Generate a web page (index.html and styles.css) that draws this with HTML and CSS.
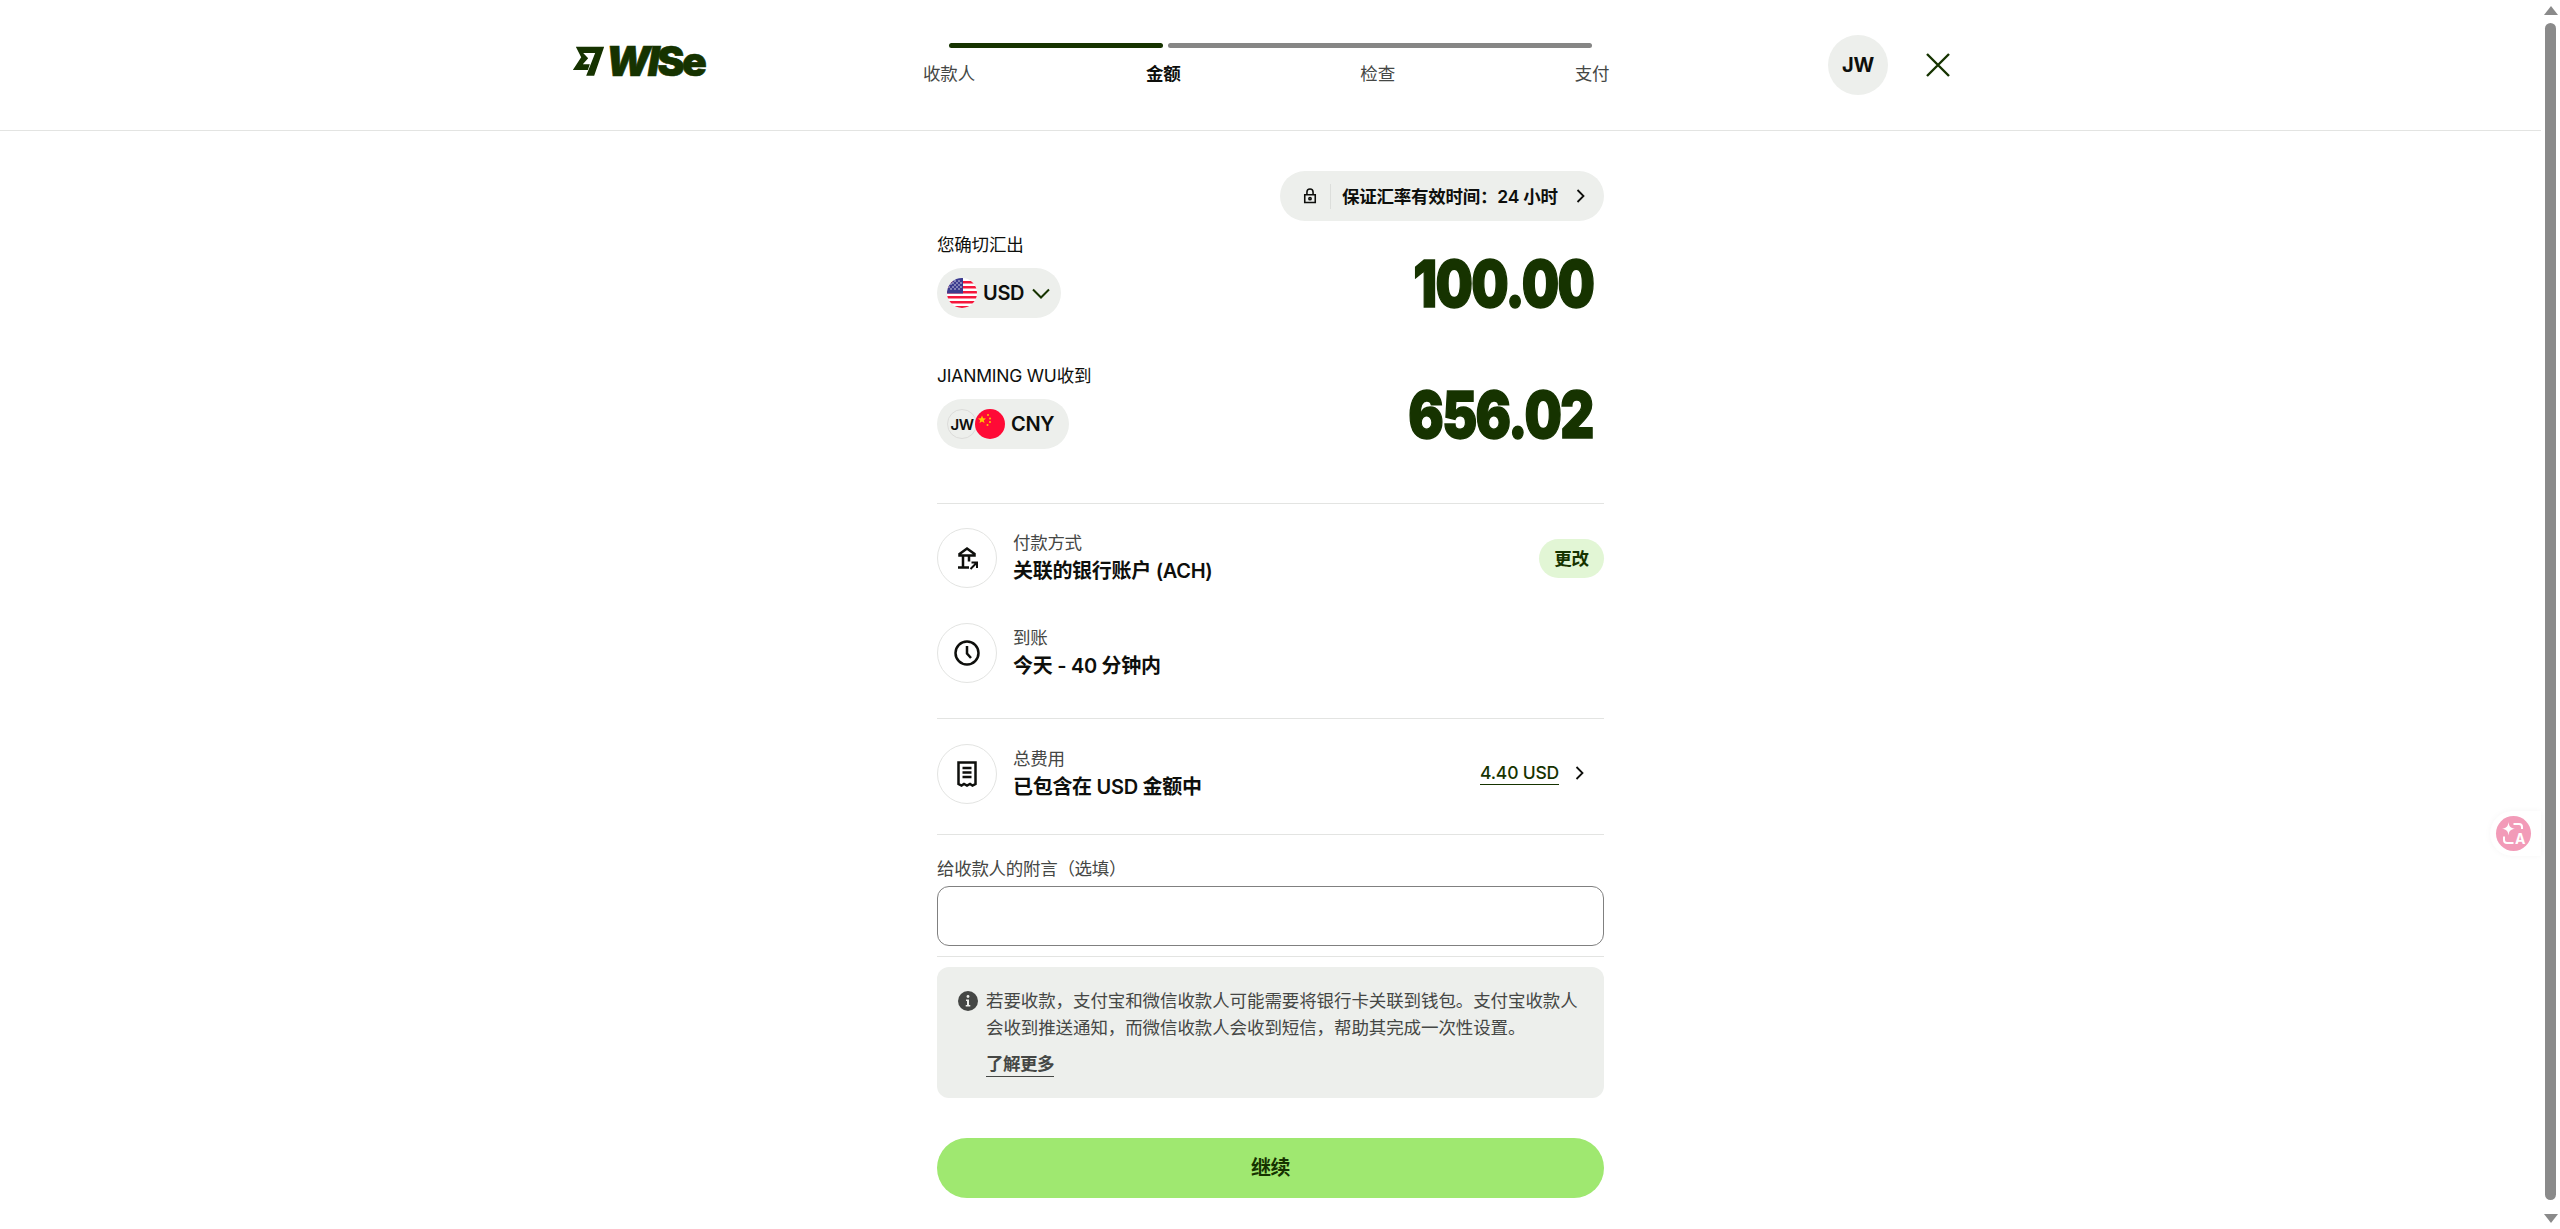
FILE: index.html
```html
<!DOCTYPE html>
<html lang="zh-CN">
<head>
<meta charset="utf-8">
<title>Wise</title>
<link rel="stylesheet" href="styles.css">
</head>
<body>
<div class="page">
  <header class="topbar">
    <div class="topbar-inner">
      <a class="logo">
        <svg class="logo-flag" viewBox="100 138 95 90"><path fill="#163300" d="M108 140H193L163 227H139L166 159H130L145 175L129 193H150L144 210H99L124 172Z"/></svg>
        <span class="logo-word"><span class="logo-slant">WI</span>Se</span>
      </a>
      <div class="stepper">
        <div class="bars"><span class="bar done"></span><span class="bar todo"></span></div>
        <div class="steps"><span class="step">收款人</span><span class="step active">金额</span><span class="step">检查</span><span class="step">支付</span></div>
      </div>
      <div class="top-actions">
        <span class="avatar">JW</span>
        <span class="close"><svg viewBox="0 0 24 24" class="close-icon"><path d="M1 1L23 23M23 1L1 23"/></svg></span>
      </div>
    </div>
  </header>
  <main class="column">
    <div class="rate-row">
      <div class="rate-pill">
        <svg class="lock" viewBox="0 0 16 18"><path d="M2 7.500H14V16.500H2ZM4.500 7.500V4.500A3.500 3.500 0 0 1 11.500 4.500V7.500"/><circle cx="8" cy="12" r="1.300"/></svg>
        <span class="rate-sep"></span>
        <span class="rate-text">保证汇率有效时间：24 小时</span>
        <svg class="chev-right" viewBox="0 0 9 14"><path d="M1.500 1L7.500 7L1.500 13"/></svg>
      </div>
    </div>

    <section class="amount first">
      <div class="amount-left">
        <div class="label">您确切汇出</div>
        <div class="cur-pill">
          <svg class="flag" viewBox="0 0 30 30"><defs><clipPath id="c1"><circle cx="15" cy="15" r="15"/></clipPath></defs><g clip-path="url(#c1)"><rect width="30" height="30" fill="#fff"/><path fill="#f5173c" d="M0 3H30V5.500H0ZM0 8H30V10.500H0ZM0 13H30V15.500H0ZM0 18H30V20.500H0ZM0 23H30V25.500H0ZM0 28H30V30H0Z"/><rect width="16" height="15.500" fill="#3c3b8f"/><g fill="#fff"><circle cx="4" cy="6" r=".7"/><circle cx="8" cy="3" r=".7"/><circle cx="8" cy="7" r=".7"/><circle cx="12" cy="3" r=".7"/><circle cx="12" cy="7" r=".7"/><circle cx="4" cy="11" r=".7"/><circle cx="8" cy="11" r=".7"/><circle cx="12" cy="11" r=".7"/><circle cx="2" cy="9" r=".7"/><circle cx="6" cy="9" r=".7"/><circle cx="10" cy="9" r=".7"/><circle cx="14" cy="9" r=".7"/><circle cx="6" cy="5" r=".7"/><circle cx="10" cy="5" r=".7"/><circle cx="14" cy="5" r=".7"/></g></g></svg>
          <span class="cur-code">USD</span>
          <svg class="chev-down" viewBox="0 0 18 11"><path d="M1 1.500L9 9.500L17 1.500"/></svg>
        </div>
      </div>
      <div class="value">100.00</div>
    </section>

    <section class="amount second">
      <div class="amount-left">
        <div class="label">JIANMING WU收到</div>
        <div class="cur-pill">
          <span class="mini-avatar">JW</span>
          <svg class="flag" viewBox="0 0 30 30"><circle cx="15" cy="15" r="15" fill="#ff0a36"/><g fill="#ffc400"><path d="M7 6.500L8.100 9.300L11 9.500L8.800 11.300L9.500 14.100L7 12.600L4.500 14.100L5.200 11.300L3 9.500L5.900 9.300Z"/><circle cx="13" cy="6" r="1"/><circle cx="15" cy="9.500" r="1"/><circle cx="15" cy="13" r="1"/><circle cx="12.500" cy="16" r="1"/></g></svg>
          <span class="cur-code">CNY</span>
        </div>
      </div>
      <div class="value">656.02</div>
    </section>

    <hr class="rule rule-a">

    <div class="info-row first-row">
      <span class="round-icon"><svg class="ri bank" viewBox="0 0 24 24"><path d="M4.500 8L12 2.500L19.500 8V9.500H4.500ZM8 9.500V21M14 9.500V15.500M3 21.500H14"/><path class="thin" d="M15.500 23L21 17.500M16.500 16.500H22V22"/></svg></span>
      <div class="info-text"><div class="info-title">付款方式</div><div class="info-main">关联的银行账户 (ACH)</div></div>
      <button class="change">更改</button>
    </div>
    <div class="info-row second-row">
      <span class="round-icon"><svg class="ri clock" viewBox="0 0 26 26"><circle cx="13" cy="13" r="11.500"/><path d="M13 6V13.500L17 18"/></svg></span>
      <div class="info-text"><div class="info-title">到账</div><div class="info-main">今天 - 40 分钟内</div></div>
    </div>

    <hr class="rule rule-b">

    <div class="info-row">
      <span class="round-icon"><svg class="ri receipt" viewBox="0 0 20 26"><path d="M1.500 23V1.500H18.500V23L15.500 24.500L13 23L10 24.500L7 23L4.500 24.500Z"/><path d="M5.500 7H14.500M5.500 11.500H14.500M5.500 16H14.500"/></svg></span>
      <div class="info-text"><div class="info-title">总费用</div><div class="info-main">已包含在 USD 金额中</div></div>
      <div class="fee"><span class="fee-link">4.40 USD</span><svg class="chev-right" viewBox="0 0 9 14"><path d="M1.500 1L7.500 7L1.500 13"/></svg></div>
    </div>

    <hr class="rule rule-c">

    <label class="field-label" for="msg">给收款人的附言（选填）</label>
    <input id="msg" class="field" type="text">
    <hr class="rule rule-d">

    <div class="alert">
      <svg class="alert-icon" viewBox="0 0 20 20"><circle cx="10" cy="10" r="10" fill="#454745"/><circle cx="10" cy="5.500" r="1.400" fill="#edefec"/><path d="M8 8.500H11V14H12.300V15.500H7.700V14H9V10H8Z" fill="#edefec"/></svg>
      <div class="alert-body">
        <p class="alert-text">若要收款，支付宝和微信收款人可能需要将银行卡关联到钱包。支付宝收款人会收到推送通知，而微信收款人会收到短信，帮助其完成一次性设置。</p>
        <a class="alert-link">了解更多</a>
      </div>
    </div>

    <button class="continue">继续</button>
  </main>
  <div class="fab">
    <span class="fab-circle">
      <svg class="fab-icon" viewBox="0 0 35 35"><path class="fab-fill" d="M12.500 6C13 10.500 14.500 12 19 12.800C14.500 13.500 13 15 12.500 19.500C12 15 10.500 13.500 6 12.800C10.500 12 12 10.500 12.500 6Z"/><path class="fab-line" d="M17.500 8H23A3 3 0 0 1 26 11V13M8 20.500V24A3 3 0 0 0 11 27H17.500"/><text class="fab-a" x="19" y="28">A</text></svg>
    </span>
  </div>
</div>
<div class="scrollbar">
  <span class="arrow up"></span>
  <span class="thumb"></span>
  <span class="arrow down"></span>
</div>
</body>
</html>
```
FILE: styles.css
```css
* { box-sizing: border-box; }
html, body { margin: 0; height: 100%; overflow: hidden; }
body {
  display: flex;
  background: #fff;
  color: #0e0f0c;
  font-family: Inter, "Noto Sans CJK SC", sans-serif;
  font-size: 17.5px;
}
.page { flex: 1; position: relative; min-width: 0; }

/* header */
.topbar { height: 131px; border-bottom: 1px solid #e3e4e2; }
.topbar-inner { width: 1395px; height: 130px; margin: 0 auto; display: flex; position: relative; }
.logo { display: flex; align-items: flex-start; width: 376px; padding-top: 46px; flex: none; }
.logo-flag { width: 32px; height: 30px; flex: none; }
.logo-word {
  font-weight: 900;
  font-size: 41px;
  line-height: 30px;
  letter-spacing: -2.500px;
  color: #163300;
  margin-left: 1px;
  -webkit-text-stroke: .6px #163300;
}
.logo-slant { font-style: italic; }
.stepper { width: 643px; flex: none; padding-top: 43px; }
.bars { display: flex; gap: 5px; height: 5px; }
.bar { display: block; height: 5px; border-radius: 3px; }
.bar.done { width: 214px; background: #163300; }
.bar.todo { flex: 1; background: #868685; }
.steps { display: flex; justify-content: space-between; margin: 13px -30px 0; }
.step { width: 60px; text-align: center; font-size: 17.5px; line-height: 25px; color: #454745; letter-spacing: -.2px; white-space: nowrap; }
.step.active { font-weight: 700; color: #0e0f0c; }
.top-actions { margin-left: auto; display: flex; gap: 20px; padding-top: 35px; align-items: flex-start; }
.avatar { width: 60px; height: 60px; border-radius: 50%; background: #edefec; display: flex; align-items: center; justify-content: center; font-weight: 700; font-size: 20px; letter-spacing: -.3px; }
.close { width: 60px; height: 60px; display: flex; align-items: center; justify-content: center; }
.close-icon { width: 24px; height: 24px; fill: none; stroke: #163300; stroke-width: 2.400; }

/* column */
.column { width: 667px; margin: 0 auto; }
.rate-row { display: flex; justify-content: flex-end; padding-top: 40px; }
.rate-pill { width: 324px; height: 50px; border-radius: 25px; background: #edefec; display: flex; align-items: center; padding-left: 23px; }
.lock { width: 14px; height: 16px; fill: none; stroke: #0e0f0c; stroke-width: 1.800; flex: none; }
.rate-sep { width: 1px; height: 25px; background: #dcdedb; margin: 0 11px 0 13px; flex: none; }
.rate-text { font-weight: 600; font-size: 17.5px; line-height: 25px; width: 234px; white-space: nowrap; letter-spacing: -.25px; }
.chev-right { width: 9px; height: 14px; fill: none; stroke: #0e0f0c; stroke-width: 1.800; flex: none; }

.amount { display: flex; justify-content: space-between; align-items: flex-start; }
.amount.first { padding-top: 11px; }
.amount.second { padding-top: 45px; }
.label { font-size: 17.5px; line-height: 25px; letter-spacing: -.2px; margin-bottom: 11px; white-space: nowrap; }
.cur-pill { display: inline-flex; align-items: center; height: 50px; border-radius: 25px; background: #edefec; padding: 0 11px 0 10px; }
.flag { width: 30px; height: 30px; flex: none; }
.cur-code { font-weight: 600; font-size: 20px; line-height: 25px; margin-left: 6px; letter-spacing: -.3px; }
.chev-down { width: 18px; height: 11px; margin-left: 8px; fill: none; stroke: #163300; stroke-width: 2; }
.mini-avatar { width: 30px; height: 30px; margin-right: -2px; border-radius: 50%; border: 1px solid #dcdcda; font-size: 15px; font-weight: 600; display: flex; align-items: center; justify-content: center; letter-spacing: -.4px; }
.second .cur-pill { padding-right: 15px; }
.value {
  font-family: Inter, sans-serif;
  font-weight: 900;
  font-size: 65px;
  line-height: 60px;
  letter-spacing: -2px;
  color: #163300;
  -webkit-text-stroke: 1.500px #163300;
  margin-top: 22px;
  margin-right: 11px;
  transform: scaleX(.81);
  transform-origin: right center;
}

.rule { border: 0; height: 1px; background: #e3e4e2; margin: 0; }
.rule-a { margin-top: 54px; }
.rule-b { margin-top: 35px; }
.rule-c { margin-top: 30px; }
.rule-d { margin-top: 10px; }

.info-row { display: flex; align-items: center; height: 60px; margin-top: 25px; }
.info-row.first-row { margin-top: 24px; }
.info-row.second-row { margin-top: 35px; }
.round-icon { width: 60px; height: 60px; border-radius: 50%; border: 1px solid #e3e4e2; display: flex; align-items: center; justify-content: center; flex: none; }
.ri { fill: none; stroke: #0e0f0c; stroke-width: 2.500; }
.bank { width: 24px; height: 24px; }
.bank .thin { stroke-width: 2; }
.clock { width: 26px; height: 26px; }
.receipt { width: 20px; height: 26px; }
.info-text { margin-left: 16px; flex: 1; min-width: 0; }
.info-title { font-size: 17.5px; line-height: 25px; color: #454745; letter-spacing: -.3px; }
.info-main { font-size: 20px; line-height: 31px; margin-top: 1px; font-weight: 600; letter-spacing: -.3px; }
.change { border: 0; padding: 0; width: 65px; height: 39px; border-radius: 20px; background: #e2f6d5; color: #163300; font: 600 17.5px/25px Inter, "Noto Sans CJK SC", sans-serif; letter-spacing: -.3px; }
.fee { display: flex; align-items: center; padding-right: 20px; gap: 16px; margin-top: -2px; }
.fee-link { font-size: 17.5px; line-height: 23px; font-weight: 500; color: #163300; border-bottom: 1px solid #163300; letter-spacing: -.2px; }

.field-label { display: block; margin-top: 21px; font-size: 17.5px; line-height: 25px; color: #454745; letter-spacing: -.3px; }
.field { display: block; width: 100%; height: 60px; margin-top: 5px; border: 1px solid #808080; border-radius: 12px; background: #fff; outline: 0; }

.alert { display: flex; margin-top: 10px; padding: 20px 21px 21px; background: #edefec; border-radius: 12px; height: 131px; }
.alert-icon { width: 20px; height: 20px; margin-top: 4px; flex: none; }
.alert-body { margin-left: 8px; flex: 1; min-width: 0; }
.alert-text { margin: 0; font-size: 17.5px; line-height: 27px; color: #454745; letter-spacing: -.1px; }
.alert-link { display: inline-block; margin-top: 11px; font-size: 17.5px; line-height: 24px; font-weight: 600; color: #454745; border-bottom: 1px solid #454745; letter-spacing: -.5px; }

.continue { display: block; width: 100%; height: 60px; margin-top: 40px; border: 0; border-radius: 30px; background: #9fe870; color: #163300; font: 600 20px/30px Inter, "Noto Sans CJK SC", sans-serif; letter-spacing: -.5px; }

/* floating tab */
.fab { position: absolute; right: 0; top: 811px; width: 51px; height: 45px; padding: 5px 0 0 6px; background: #fff; border-radius: 23px 0 0 23px; box-shadow: 0 0 6px rgba(0,0,0,.04); }
.fab-circle { display: block; width: 35px; height: 35px; border-radius: 50%; background: #f29bb8; }
.fab-icon { display: block; width: 35px; height: 35px; }
.fab-fill { fill: #fff; }
.fab-line { fill: none; stroke: #fff; stroke-width: 2; }
.fab-a { font: 700 14px Inter, sans-serif; fill: #fff; }

/* scrollbar */
.scrollbar { width: 19px; flex: none; background: #fff; display: flex; flex-direction: column; align-items: center; padding: 6px 0; }
.arrow { width: 0; height: 0; border-left: 7px solid transparent; border-right: 7px solid transparent; flex: none; }
.arrow.up { border-bottom: 9px solid #8a8a8a; }
.arrow.down { border-top: 9px solid #8a8a8a; }
.thumb { width: 11px; flex: 1; margin: 8px 0 14px; background: #8a8a8a; border-radius: 6px; }
```
